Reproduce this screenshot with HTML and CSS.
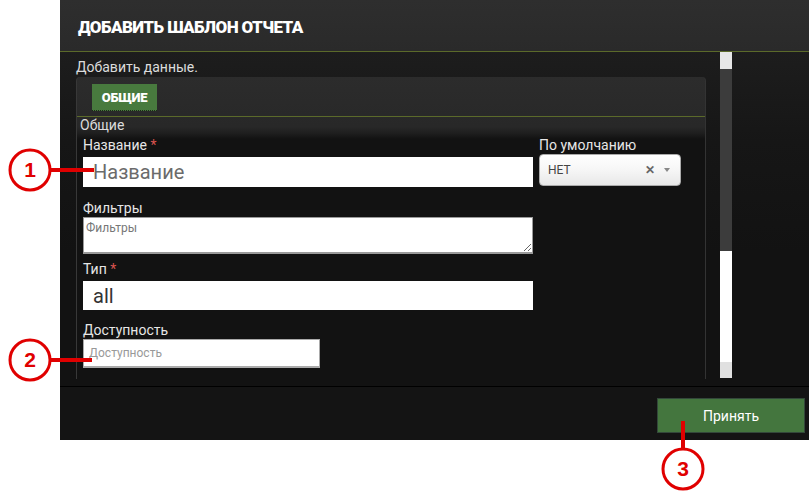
FILE: index.html
```html
<!DOCTYPE html>
<html lang="ru">
<head>
<meta charset="utf-8">
<title>Добавить шаблон отчета</title>
<link rel="stylesheet" href="styles.css">
</head>
<body>
<div class="page">
  <div class="modal">
    <div class="modal-header"><h1 class="title">ДОБАВИТЬ ШАБЛОН ОТЧЕТА</h1></div>
    <div class="modal-body">
      <div class="scroll">
        <p class="intro">Добавить данные.</p>
        <div class="panel">
          <div class="tabs"><span class="tab">ОБЩИЕ</span></div>
          <div class="pane">
            <div class="legend">Общие</div>
            <div class="grid">
              <div class="col-main">
                <label class="lbl l1">Название <span class="req">*</span></label>
                <input class="inp big i1" type="text" placeholder="Название">
                <label class="lbl l2">Фильтры</label>
                <textarea class="area" placeholder="Фильтры"></textarea>
                <label class="lbl l3">Тип <span class="req">*</span></label>
                <input class="inp big i3" type="text" value="all">
                <label class="lbl l4">Доступность</label>
                <input class="inp small" type="text" placeholder="Доступность">
              </div>
              <div class="col-side">
                <label class="lbl">По умолчанию</label>
                <div class="select">
                  <span class="sel-val">НЕТ</span>
                  <span class="sel-x">✕</span>
                  <span class="sel-arrow"></span>
                </div>
              </div>
            </div>
          </div>
        </div>
      </div>
      <div class="scrollbar">
        <div class="sb-thumb"></div>
        <div class="sb-track"></div>
        <div class="sb-white"></div>
        <div class="sb-end"></div>
      </div>
    </div>
    <div class="modal-footer"><button class="btn">Принять</button></div>
  </div>

  <svg class="annot" width="809" height="492" viewBox="0 0 809 492">
    <g fill="#fff" stroke="#e00000" stroke-width="3">
      <line x1="51" y1="170" x2="94" y2="170" stroke-width="4"/>
      <circle cx="30" cy="170" r="20"/>
      <line x1="51" y1="360" x2="92" y2="360" stroke-width="4"/>
      <circle cx="30" cy="360" r="20"/>
      <line x1="683" y1="421" x2="683" y2="449" stroke-width="4"/>
      <circle cx="683" cy="469" r="20"/>
    </g>
    <g fill="#e00000" font-family="Liberation Sans, Arial, sans-serif" font-weight="bold" font-size="21" text-anchor="middle">
      <text x="30" y="177">1</text>
      <text x="30" y="367">2</text>
      <text x="683" y="476">3</text>
    </g>
  </svg>
</div>
</body>
</html>
```
FILE: styles.css
```css
html, body {
  margin: 0;
  padding: 0;
  background: #fff;
}
.page {
  position: relative;
  width: 809px;
  height: 492px;
  overflow: hidden;
  font-family: Roboto, "Liberation Sans", Arial, sans-serif;
}
.modal {
  margin-left: 60px;
  width: 749px;
  height: 440px;
  display: flex;
  flex-direction: column;
  background: #141414;
}
.modal-header {
  height: 51px;
  border-bottom: 1px solid #5b6a2a;
  background: linear-gradient(#2e2e2e, #2a2a2a);
  display: flex;
  align-items: center;
  padding-left: 18px;
}
.title {
  margin: 0;
  color: #fff;
  font-size: 17px;
  font-weight: 900;
  letter-spacing: -0.6px;
  padding-top: 2px;
}
.modal-body {
  height: 334px;
  display: flex;
  background: linear-gradient(#1d1d1d 0, #161616 90px, #121212 200px);
}
.scroll {
  width: 644px;
  height: 327px;
  overflow: hidden;
  padding-left: 16px;
}
.intro {
  margin: 7px 0 2px;
  font-size: 14px;
  line-height: 16px;
  color: #dcdcdc;
}
.panel {
  width: 628px;
  height: 302px;
  border-left: 1px solid #383838;
  border-right: 1px solid #333;
  border-radius: 4px 4px 0 0;
  background: linear-gradient(#2c2c2c 0, #282828 50px, #1f1f1f 56px, #121212 62px);
}
.tabs {
  padding: 7px 0 5px 15px;
  border-bottom: 1px solid #5b6a2a;
  display: flex;
}
.tab {
  height: 26px;
  width: 65px;
  background: #487a3e;
  border-bottom: 1px dotted #1c2a18;
  color: #fff;
  font-weight: 900;
  font-size: 13px;
  letter-spacing: -0.3px;
  display: flex;
  align-items: center;
  justify-content: center;
}
.pane {
  padding-left: 3px;
}
.legend {
  font-size: 14px;
  line-height: 16px;
  color: #dcdcdc;
}
.grid {
  display: flex;
  gap: 6px;
  padding-left: 3px;
  margin-top: 4px;
}
.col-main {
  width: 450px;
  display: flex;
  flex-direction: column;
  align-items: flex-start;
}
.col-side {
  width: 142px;
  display: flex;
  flex-direction: column;
}
.lbl {
  font-size: 14px;
  line-height: 16px;
  color: #e6e6e6;
}
.req {
  color: #d9534f;
}
.inp {
  box-sizing: border-box;
  border: none;
  background: #fff;
  font-family: Roboto, "Liberation Sans", Arial, sans-serif;
  outline: none;
  margin: 0;
}
.big {
  width: 450px;
  font-size: 20px;
  padding: 0 10px;
  color: #333;
}
.big::placeholder {
  color: #6b6b6b;
}
.i1 {
  height: 30px;
  margin-top: 4px;
  margin-bottom: 13px;
}
.area {
  box-sizing: border-box;
  width: 450px;
  height: 37px;
  margin: 1px 0 7px;
  border: 1px solid #9a9a9a;
  border-width: 1px 1px 2px 1px;
  padding: 3px 2px;
  font-family: Roboto, "Liberation Sans", Arial, sans-serif;
  font-size: 12px;
  background: #fff;
  outline: none;
}
.area::placeholder {
  color: #777;
}
.i3 {
  height: 29px;
  margin-top: 4px;
  margin-bottom: 12px;
}
.small {
  width: 237px;
  height: 29px;
  margin-top: 1px;
  border: 1px solid #aaa;
  border-width: 1px 1px 2px 1px;
  font-size: 12px;
  padding: 0 5px;
}
.small::placeholder {
  color: #999;
}
.select {
  box-sizing: border-box;
  margin-top: 1px;
  height: 32px;
  width: 142px;
  border: 1px solid #aaa;
  border-radius: 4px;
  background: linear-gradient(#fff 0, #f6f6f6 50%, #e8e8e8 100%);
  display: flex;
  align-items: center;
  padding-left: 8px;
  font-size: 12px;
  color: #444;
}
.sel-val {
  flex: 1;
}
.sel-x {
  color: #666;
  font-weight: bold;
  font-size: 12px;
  margin-right: 9px;
}
.sel-arrow {
  width: 0;
  height: 0;
  border-left: 3px solid transparent;
  border-right: 3px solid transparent;
  border-top: 4px solid #888;
  margin-right: 10px;
}
.scrollbar {
  width: 12px;
  height: 326px;
  display: flex;
  flex-direction: column;
}
.sb-thumb {
  height: 17px;
  background: #e6e6e6;
}
.sb-track {
  height: 182px;
  background: #3c3c3c;
}
.sb-white {
  height: 111px;
  background: #fff;
}
.sb-end {
  height: 16px;
  background: #e0e0e0;
}
.modal-footer {
  flex: 1;
  border-top: 1px solid #000;
  background: #141414;
  display: flex;
  justify-content: flex-end;
  align-items: flex-start;
  padding-top: 11px;
  padding-right: 4px;
}
.btn {
  width: 148px;
  height: 35px;
  background: #44763e;
  border: 1px solid #33483a;
  color: #fff;
  font-family: Roboto, "Liberation Sans", Arial, sans-serif;
  font-size: 14px;
  padding: 0;
}
.annot {
  position: absolute;
  left: 0;
  top: 0;
  pointer-events: none;
}
```
